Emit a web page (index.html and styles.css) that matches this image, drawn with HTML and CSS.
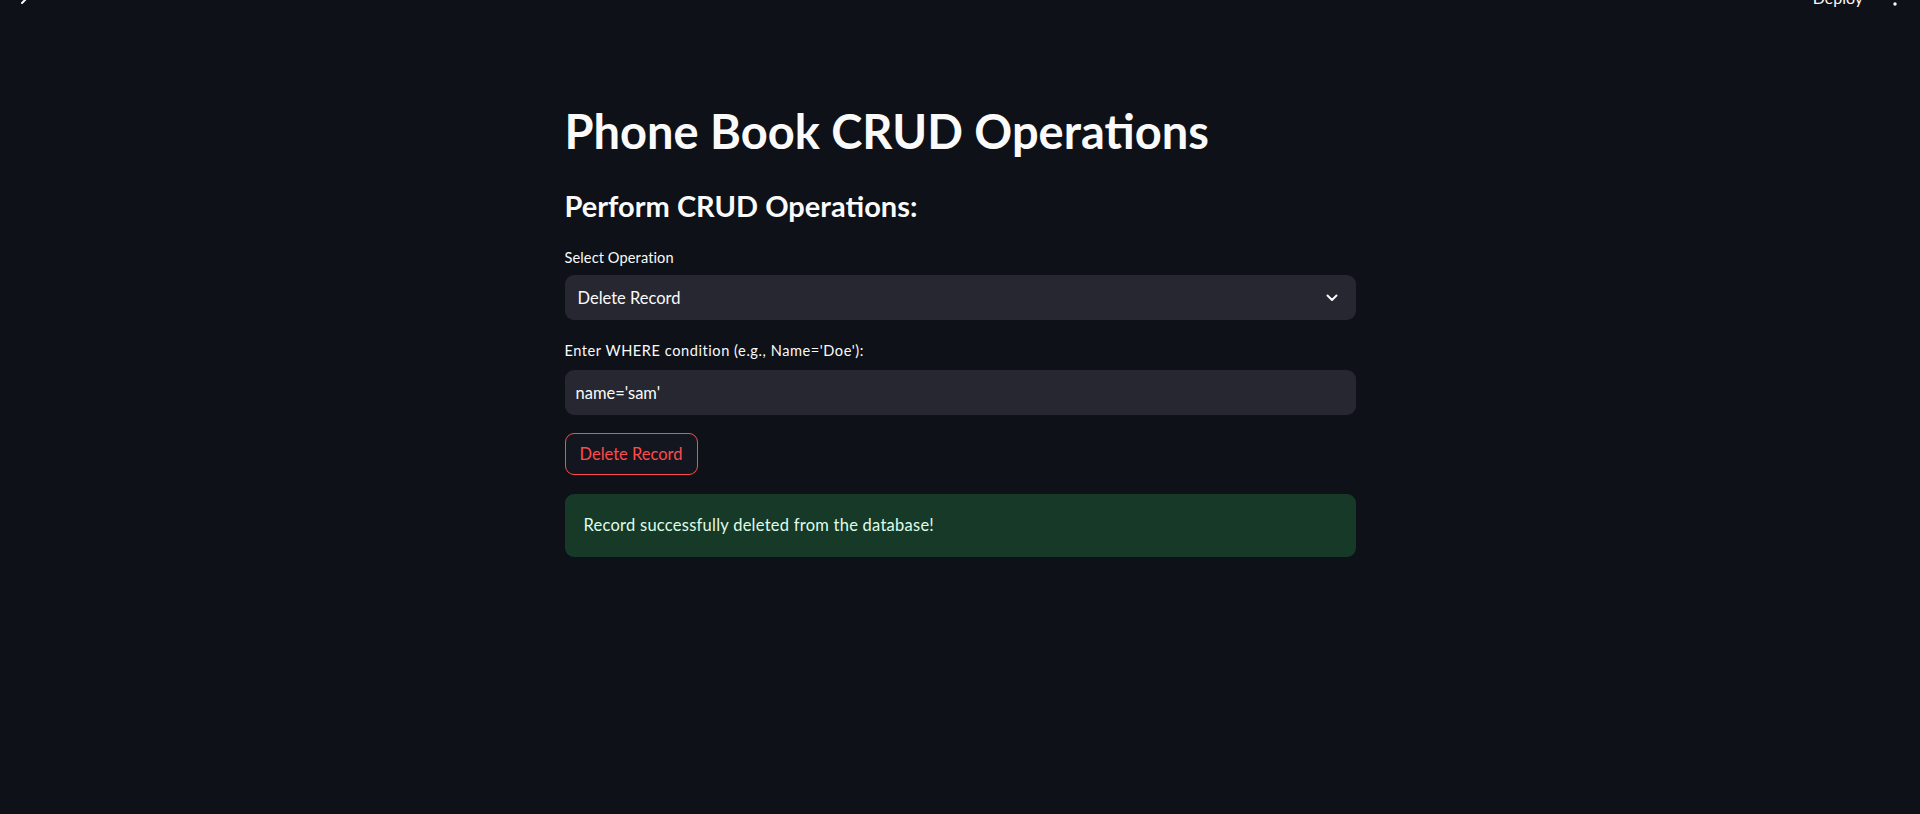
FILE: index.html
```html
<!DOCTYPE html>
<html lang="en">
<head>
<meta charset="utf-8">
<title>Phone Book CRUD Operations</title>
<link rel="stylesheet" href="styles.css">
</head>
<body>
<header class="header">
  <svg class="sidebar-toggle" width="12" height="16" viewBox="0 0 12 16" aria-hidden="true">
    <path d="M4 3 L8 7 L4 11" fill="none" stroke="#fafafa" stroke-width="2" stroke-linecap="round" stroke-linejoin="round"/>
  </svg>
  <span class="deploy">Deploy</span>
  <svg class="menu-dots" width="4" height="20" viewBox="0 0 4 20" aria-hidden="true">
    <circle cx="2" cy="4" r="1.7" fill="#fafafa"/>
    <circle cx="2" cy="10" r="1.7" fill="#fafafa"/>
    <circle cx="2" cy="16" r="1.7" fill="#fafafa"/>
  </svg>
</header>
<main class="main">
  <h1 class="title">Phone Book CRUD Operations</h1>
  <h3 class="subheader">Perform CRUD Operations:</h3>

  <div class="field-label">Select Operation</div>
  <div class="select">
    <span class="select-value">Delete Record</span>
    <svg class="chevron" width="12" height="8" viewBox="0 0 12 8" aria-hidden="true">
      <path d="M1.5 1.5 L6 6 L10.5 1.5" fill="none" stroke="#fafafa" stroke-width="2" stroke-linecap="round" stroke-linejoin="round"/>
    </svg>
  </div>

  <div class="field-label field-label-second">Enter WHERE condition (e.g., Name='Doe'):</div>
  <div class="text-input">name='sam'</div>

  <button class="btn-delete" type="button">Delete Record</button>

  <div class="alert-success">Record successfully deleted from the database!</div>
</main>
</body>
</html>
```
FILE: styles.css
```css
html, body {
  margin: 0;
  padding: 0;
}

body {
  background: #0e1117;
  color: #fafafa;
  font-family: Lato, "Noto Sans", sans-serif;
  height: 814px;
  overflow: hidden;
}

.header {
  height: 8px;
  overflow: hidden;
  display: flex;
  align-items: flex-end;
}

.sidebar-toggle {
  margin-left: 18px;
  flex: none;
}

.deploy {
  margin-left: auto;
  font-size: 16px;
  line-height: 20px;
  color: #fafafa;
}

.menu-dots {
  margin-left: 30px;
  margin-right: 23px;
  flex: none;
}

.main {
  width: 791px;
  margin: 0 auto;
  padding-top: 96px;
}

.title {
  margin: 0;
  font-size: 47px;
  line-height: 55px;
  font-weight: 700;
  color: #fafafa;
}

.subheader {
  margin: 30px 0 0;
  font-size: 29px;
  line-height: 34px;
  font-weight: 700;
  color: #fafafa;
}

.field-label {
  margin-top: 26px;
  font-size: 14.6px;
  line-height: 18px;
  letter-spacing: 0.1px;
  color: #fafafa;
}

.field-label-second {
  margin-top: 22px;
  letter-spacing: 0.55px;
}

.select {
  margin-top: 8px;
  height: 45px;
  box-sizing: border-box;
  background: #262730;
  border-radius: 9px;
  display: flex;
  align-items: center;
  padding: 0 18px 0 13px;
  font-size: 16.5px;
}

.select-value {
  flex: 1;
}

.chevron {
  flex: none;
}

.text-input {
  margin-top: 10px;
  height: 45px;
  box-sizing: border-box;
  background: #262730;
  border-radius: 9px;
  display: flex;
  align-items: center;
  padding: 0 11px;
  font-size: 16.5px;
}

.btn-delete {
  display: flex;
  align-items: center;
  justify-content: center;
  margin-top: 18px;
  height: 42px;
  box-sizing: border-box;
  padding: 0 14px;
  background: #13161e;
  border: 1px solid #ff4b4b;
  border-radius: 9px;
  color: #ff4b4b;
  font-family: inherit;
  font-size: 16.5px;
}

.alert-success {
  margin-top: 19px;
  box-sizing: border-box;
  min-height: 63px;
  padding: 18px 18px 18px 19px;
  background: #173928;
  border-radius: 9px;
  color: #dffde9;
  font-size: 16.5px;
  line-height: 27px;
  letter-spacing: 0.25px;
}
```
